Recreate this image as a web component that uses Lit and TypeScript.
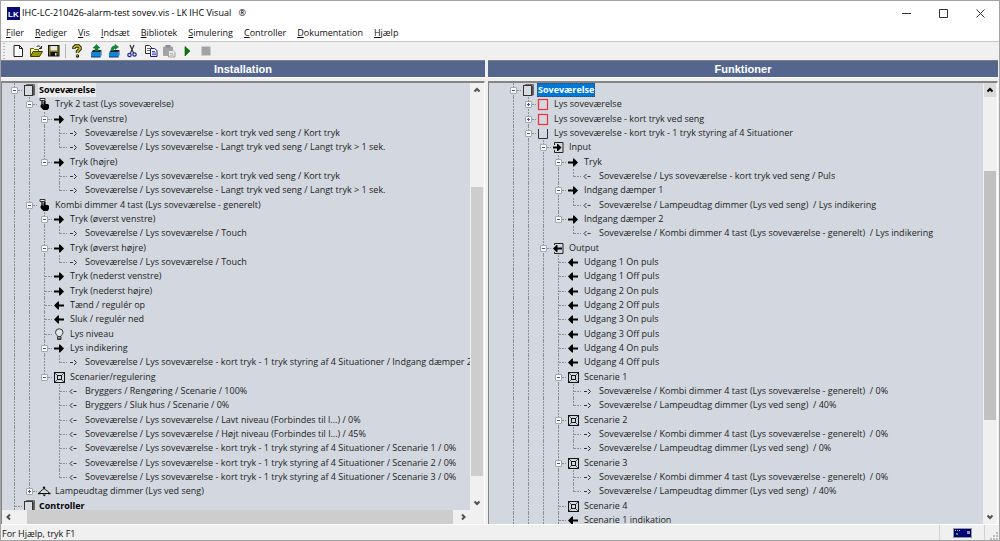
import { LitElement, html, svg, css, nothing, TemplateResult } from "lit";
import { customElement, property, state } from "lit/decorators.js";

type IconName =
  | "stack" | "hand" | "in" | "out" | "linkTo" | "linkFrom" | "bulb" | "scene"
  | "lamp" | "redBox" | "openBox" | "inputBox" | "outputBox";

/** [level, icon, label, expander] */
type Row = [number, IconName, string, ("-" | "+")?];

const glyphs: Record<IconName, TemplateResult> = {
  stack: svg`<path d="M4.5 2V1.5H12.5V12H12" fill="none" stroke="#666" /><path d="M10.5 2.5h1.5v10h-1.5z" fill="#555" />
    <rect x="2.5" y="2.5" width="8" height="10" fill="#d8dce2" stroke="#333" />`,
  hand: svg`<path d="M3 1.5h5v2H3z" fill="#eee" stroke="#333" /><path d="M5 3.5v4M8 4v3" stroke="#222" stroke-width="1.4" />
    <path d="M4.5 7h1l1 1V4.500h1.500V7H11l1 1v3l-1.500 2H6.500L3.500 10V8.500z" fill="#000" />`,
  in: svg`<path d="M2 6.500h5V3.500h1l4 4-4 4H7V8.500H2z" fill="#000" />`,
  out: svg`<path d="M12 6.500H7V3.500H6l-4 4 4 4h1V8.500h5z" fill="#000" />`,
  linkTo: svg`<path d="M3 7.500h3M7 5l2.500 2.500L7 10" fill="none" stroke="#333" />`,
  linkFrom: svg`<path d="M9.500 7.500h-3M5.500 5L3 7.500 5.500 10" fill="none" stroke="#333" />`,
  bulb: svg`<path d="M5.500 9.500C5.500 8 3.500 7.500 3.500 5.500a3.700 3.700 0 0 1 7.500 0C11 7.500 9 8 9 9.500z" fill="#e2e6ea" stroke="#333" />
    <path d="M5.500 10v2.500h3.500V10M5.500 11.200H9" fill="none" stroke="#333" />`,
  scene: svg`<rect x="2.500" y="2.500" width="10" height="10" fill="none" stroke="#111" /><rect x="5.500" y="5.500" width="4" height="4" fill="none" stroke="#111" />
    <path d="M3 3l2.500 2.500M12 3L9.500 5.500M3 12l2.500-2.500M12 12L9.500 9.500" stroke="#333" stroke-width=".8" />`,
  lamp: svg`<path d="M2.500 9.500C2.500 7 5 6.500 7 4.500 9 6.500 12 7 12 9.500z" fill="none" stroke="#111" />
    <circle cx="7" cy="3.800" r="1.200" fill="#111" /><path d="M1 9.500h2.500M11 9.500h2.500" stroke="#111" stroke-width="1.600" /><path d="M5.500 10.500h3.500l-1.700 2z" fill="#111" />`,
  redBox: svg`<rect x="2.500" y="2.500" width="9" height="10" fill="none" stroke="#f03038" stroke-width="1.200" />`,
  openBox: svg`<path d="M2.500 3v9.500h9V3" fill="none" stroke="#333" />`,
  inputBox: svg`<path d="M3.500 5V2.500h8.500v10H3.500V10" fill="none" stroke="#222" /><path d="M2 6.500h4V4h1l3.500 3.500L7 11H6V8.500H2z" fill="#000" />`,
  outputBox: svg`<path d="M3.500 4V2.500h8.500v10H3.500V11" fill="none" stroke="#222" /><path d="M11 6.500H6.500V4h-1L2 7.500 5.500 11h1V8.500H11z" fill="#000" />`,
};

const SV = "Soveværelse / ";
const installation: Row[] = [
  [0, "stack", "Soveværelse", "-"],
  [1, "hand", "Tryk 2 tast (Lys soveværelse)", "-"],
  [2, "in", "Tryk (venstre)", "-"],
  [3, "linkTo", SV + "Lys soveværelse - kort tryk ved seng / Kort tryk"],
  [3, "linkTo", SV + "Lys soveværelse - Langt tryk ved seng / Langt tryk > 1 sek."],
  [2, "in", "Tryk (højre)", "-"],
  [3, "linkTo", SV + "Lys soveværelse - kort tryk ved seng / Kort tryk"],
  [3, "linkTo", SV + "Lys soveværelse - Langt tryk ved seng / Langt tryk > 1 sek."],
  [1, "hand", "Kombi dimmer 4 tast (Lys soveværelse - generelt)", "-"],
  [2, "in", "Tryk (øverst venstre)", "-"],
  [3, "linkTo", SV + "Lys soveværelse / Touch"],
  [2, "in", "Tryk (øverst højre)", "-"],
  [3, "linkTo", SV + "Lys soveværelse / Touch"],
  [2, "in", "Tryk (nederst venstre)"],
  [2, "in", "Tryk (nederst højre)"],
  [2, "out", "Tænd / regulér op"],
  [2, "out", "Sluk / regulér ned"],
  [2, "bulb", "Lys niveau"],
  [2, "in", "Lys indikering", "-"],
  [3, "linkTo", SV + "Lys soveværelse - kort tryk - 1 tryk styring af 4 Situationer / Indgang dæmper 2"],
  [2, "scene", "Scenarier/regulering", "-"],
  [3, "linkFrom", "Bryggers / Rengøring / Scenarie / 100%"],
  [3, "linkFrom", "Bryggers / Sluk hus / Scenarie / 0%"],
  [3, "linkFrom", SV + "Lys soveværelse / Lavt niveau (Forbindes til l...) / 0%"],
  [3, "linkFrom", SV + "Lys soveværelse / Højt niveau (Forbindes til l...) / 45%"],
  [3, "linkFrom", SV + "Lys soveværelse - kort tryk - 1 tryk styring af 4 Situationer / Scenarie 1 / 0%"],
  [3, "linkFrom", SV + "Lys soveværelse - kort tryk - 1 tryk styring af 4 Situationer / Scenarie 2 / 0%"],
  [3, "linkFrom", SV + "Lys soveværelse - kort tryk - 1 tryk styring af 4 Situationer / Scenarie 3 / 0%"],
  [1, "lamp", "Lampeudtag dimmer (Lys ved seng)", "+"],
  [0, "stack", "Controller"],
];

const kombi = SV + "Kombi dimmer 4 tast (Lys soveværelse - generelt)  / ";
const lampe = SV + "Lampeudtag dimmer (Lys ved seng)  / ";
const scenario = (n: number, a: string, b: string): Row[] => [
  [3, "scene", `Scenarie ${n}`, "-"],
  [4, "linkTo", kombi + a],
  [4, "linkTo", lampe + b],
];
const functions: Row[] = [
  [0, "stack", "Soveværelse", "-"],
  [1, "redBox", "Lys soveværelse", "+"],
  [1, "redBox", "Lys soveværelse - kort tryk ved seng", "+"],
  [1, "openBox", "Lys soveværelse - kort tryk - 1 tryk styring af 4 Situationer", "-"],
  [2, "inputBox", "Input", "-"],
  [3, "in", "Tryk", "-"],
  [4, "linkFrom", SV + "Lys soveværelse - kort tryk ved seng / Puls"],
  [3, "in", "Indgang dæmper 1", "-"],
  [4, "linkFrom", lampe + "Lys indikering"],
  [3, "in", "Indgang dæmper 2", "-"],
  [4, "linkFrom", kombi + "Lys indikering"],
  [2, "outputBox", "Output", "-"],
  ...[1, 2, 3, 4].flatMap((n): Row[] => [
    [3, "out", `Udgang ${n} On puls`],
    [3, "out", `Udgang ${n} Off puls`],
  ]),
  ...scenario(1, "0%", "40%"),
  ...scenario(2, "0%", "0%"),
  ...scenario(3, "0%", "40%"),
  [3, "scene", "Scenarie 4"],
  [3, "out", "Scenarie 1 indikation"],
];

@customElement("tree-view")
class TreeView extends LitElement {
  @property({ attribute: false }) rows: Row[] = [];
  /** Levels whose branch runs on past the last row. */
  @property({ attribute: false }) openLevels: number[] = [];
  @property() marker = "inactive";
  @state() private closed = new Set<number>();

  static styles = css`
    :host { display: block; min-width: 0; overflow: hidden; color: #1c1c1c; }
    .row { display: flex; height: 14px; line-height: 14px; overflow: hidden; white-space: pre; }
    .row:nth-child(3n + 2) { height: 15px; }
    svg { display: block; flex: none; }
    .toggle { flex: none; border: 0; padding: 0; margin: 0; width: 15px; height: 15px; background: none; }
    .label { margin-left: 1px; padding: 0 1px; }
    .label:not(.bold) { padding-left: 2px; }
    .bold { font-weight: 700; color: #000; }
    .inactive { background: #ececec; }
    .active { background: #0078d7; color: #fff; outline: 1px dotted #3c4654; outline-offset: -1px; }
  `;

  private continues(i: number, level: number): boolean {
    for (let j = i + 1; j < this.rows.length; j++) {
      if (this.rows[j][0] < level) return false;
      if (this.rows[j][0] === level) return true;
    }
    return this.openLevels.includes(level);
  }

  private toggle(i: number) {
    const next = new Set(this.closed);
    next.has(i) ? next.delete(i) : next.add(i);
    this.closed = next;
  }

  private line(x1: number, y1: number, x2: number, y2: number) {
    return svg`<line x1=${x1} y1=${y1} x2=${x2} y2=${y2} stroke="#8b9096" stroke-dasharray="2 1" />`;
  }

  private joint(i: number, level: number, sign?: string) {
    const art = html`<svg width="15" height="15" viewBox="0 0 15 15" aria-hidden="true">
      ${this.line(7.5, 0, 7.5, this.continues(i, level) ? 15 : 8)}
      ${this.line(8, 7.5, 15, 7.5)}
      ${sign ? svg`<rect x="4.500" y="4.500" width="6" height="6" rx=".5" fill="#fafafa" stroke="#a3a6aa" />
        <path d=${sign === "+" ? "M6 7.500h3M7.500 6v3" : "M6 7.500h3"} stroke="#3b56a8" />` : nothing}
    </svg>`;
    return sign
      ? html`<button class="toggle" aria-label=${sign === "+" ? "Fold ud" : "Fold ind"} @click=${() => this.toggle(i)}>${art}</button>`
      : art;
  }

  render() {
    let hiddenBelow = Infinity;
    return html`<div role="tree">${this.rows.map(([level, icon, label, sign], i) => {
      if (level > hiddenBelow) return nothing;
      hiddenBelow = this.closed.has(i) ? level : Infinity;
      const shown = sign && this.closed.has(i) ? (sign === "-" ? "+" : "-") : sign;
      const mark = level === 0 ? (i === 0 ? `bold ${this.marker}` : "bold") : "";
      return html`<div class="row" role="treeitem" aria-level=${level + 1}>
        ${level ? html`<svg width=${level * 15} height="15" aria-hidden="true">
          ${Array.from({ length: level }, (_, k) => this.continues(i, k) ? this.line(k * 15 + 7.5, 0, k * 15 + 7.5, 15) : nothing)}
        </svg>` : nothing}${this.joint(i, level, shown)}<svg width="15" height="14" viewBox="0 0 15 14" aria-hidden="true">${glyphs[icon]}</svg><span class="label ${mark}">${label}</span></div>`;
    })}</div>`;
  }
}

@customElement("scroll-bar")
class ScrollBar extends LitElement {
  @property() direction = "vertical";
  @property({ type: Boolean }) hot = false;
  /** Shares of the track before, under and after the thumb. */
  @property({ attribute: false }) parts: number[] = [0, 1, 0];

  static styles = css`
    :host { display: block; background: #f0f0f0; min-width: 0; min-height: 0; }
    .bar { display: flex; height: 100%; }
    .vertical { flex-direction: column; padding: 0 1px; }
    button { flex: none; display: grid; place-items: center; width: 14px; height: 13px; padding: 0; border: 0; background: none; }
    .vertical button { width: 100%; height: 14px; }
    .thumb { background: #cdcdcd; }
    .hot .thumb { background: #c1c1c1; }
    .hot button:first-child { background: #dadada; }
    path { fill: none; stroke: #505050; stroke-width: 2; }
    .hot button:first-child path { stroke: #000; }
  `;

  render() {
    const vertical = this.direction === "vertical";
    const [a, b, c] = this.parts;
    const arrow = (d: string, name: string) => html`<button aria-label=${name}>
      <svg width="8" height="8" viewBox="0 0 8 8"><path d=${d} /></svg></button>`;
    return html`<div class="bar ${this.direction} ${this.hot ? "hot" : ""}">
      ${vertical ? arrow("M1.500 5.500L4 3l2.500 2.500", "Rul op") : arrow("M5 1.500L2.500 4 5 6.500", "Rul til venstre")}
      <div style="flex:${a} 0 0"></div><div class="thumb" style="flex:${b} 0 0"></div><div style="flex:${c} 0 0"></div>
      ${vertical ? arrow("M1.500 2.500L4 5l2.500-2.500", "Rul ned") : arrow("M3 1.500L5.500 4 3 6.500", "Rul til højre")}
    </div>`;
  }
}

const basket = svg`<path d="M2.500 8L4 6h8.500L11.500 8z" fill="#222" /><rect x="2" y="8" width="9.500" height="5" rx=".5" fill="#1583d8" /><path d="M2 13h9.500" stroke="#0a3d70" /><path d="M11.500 8l1-2v5l-1 2z" fill="#0b5a9c" />`;
const tools: Record<string, TemplateResult> = {
  Ny: svg`<path d="M3 1.500h5.500l3 3v8H3z" fill="#fff" stroke="#222" /><path d="M8.500 1.500v3h3" fill="none" stroke="#222" />`,
  Åbn: svg`<path d="M1.500 12V4.500h3l1 1h4V7" fill="#ffffa0" stroke="#5c5c00" /><path d="M1.500 12.500L4 7.500h9.500l-3 5z" fill="#98980c" stroke="#3e3e00" /><path d="M7.500 3c1.500-2 3.500-1 4.500 1M12.500 2v2.500H10" fill="none" stroke="#222" />`,
  Gem: svg`<rect x="1.500" y="1.500" width="10.500" height="10.500" fill="#7c7c14" stroke="#111" /><rect x="3.500" y="2" width="6.500" height="4.500" fill="#e8e8e8" /><rect x="3.500" y="8" width="7" height="4" fill="#111" /><rect x="8" y="9" width="1.500" height="2.500" fill="#ddd" />`,
  Hjælp: svg`<path d="M4 5V3.500L5.500 2h3L10 3.500V5L7.500 7.500V9" fill="none" stroke="#111" stroke-width="3.400" /><path d="M4 4.500V3.500L5.500 2h3L10 3.500V5L7.500 7.500V9" fill="none" stroke="#d8d000" stroke-width="1.600" /><circle cx="7.500" cy="12" r="1.700" fill="#111" /><circle cx="7.300" cy="11.800" r=".8" fill="#d8d000" />`,
  Hent: svg`${basket}<path d="M7.500 0.500L11 4H9v3H6V4H4z" fill="#0a8c28" stroke="#064" stroke-width=".5" />`,
  Send: svg`${basket}<path d="M4 6.500c0-3 1-4.500 4-4.500V.5L11.500 3 8 5.500V4.200C6.500 4.200 6.500 5 6.500 7z" fill="#0a8c28" stroke="#064" stroke-width=".5" />`,
  Klip: svg`<path d="M5 1l3.500 8M9 1L5.500 9" stroke="#333" stroke-width="1.200" /><circle cx="4.500" cy="11" r="1.700" fill="none" stroke="#2424a0" stroke-width="1.200" /><circle cx="9.500" cy="10.500" r="1.700" fill="none" stroke="#2424a0" stroke-width="1.200" />`,
  Kopier: svg`<path d="M1.500 1.500h4l2 2v6h-6z" fill="#fff" stroke="#333" /><path d="M3 4.500h3M3 6.500h3" stroke="#333" stroke-width=".7" /><path d="M6.500 4.500h4l2.500 2v6H6.500z" fill="#fff" stroke="#1c1c90" /><path d="M8 7.500h3M8 9h4M8 10.700h4" stroke="#1c1c90" stroke-width=".8" />`,
  "Sæt ind": svg`<rect x="1" y="2.500" width="10" height="9.500" rx="1" fill="#a2a2a2" /><rect x="3.500" y="1" width="5" height="2.500" fill="#8c8c8c" /><path d="M6.500 6.500h4.500l2 2v4.500H6.500z" fill="#ececec" stroke="#a0a0a0" /><path d="M8 9.500h3M8 11.200h3.500" stroke="#a0a0a0" stroke-width=".8" />`,
  Start: svg`<path d="M5 2.500l5 4.500-5 5z" fill="#067a06" stroke="#055005" stroke-width=".6" />`,
  Stop: svg`<rect x="2.500" y="2.500" width="9" height="9" fill="#a3a3a3" />`,
};

@customElement("app-root")
class AppRoot extends LitElement {
  static styles = css`
    :host {
      display: flex; flex-direction: column; box-sizing: border-box; height: 100vh; overflow: hidden;
      background: #f0f0f0; border: 1px solid #a3a3a3; color: #111;
      font: 9px/14px "Open Sans", "Noto Sans", sans-serif;
    }
    button { font: inherit; color: inherit; border: 0; padding: 0; margin: 0; background: none; }
    svg { display: block; }
    .title { flex: none; display: flex; align-items: center; height: 24px; padding-left: 6px; background: #fff; }
    .title h1 { flex: 1; margin: 0 0 0 2px; font: inherit; color: #000; }
    .reg { margin-left: 5px; }
    .winbtn { width: 37px; height: 22px; display: grid; place-items: center; }
    .winbtn path { fill: none; stroke: #333; }
    .logo text { font: 700 8px "Liberation Sans", sans-serif; fill: #fff; }
    .menu { flex: none; display: flex; gap: 11px; height: 16px; padding-left: 5px; background: #fff; border-bottom: 1px solid #c6c6c6; }
    .menu u { text-underline-offset: 1px; }
    .tools { flex: none; display: flex; align-items: center; height: 18px; padding-left: 2px; }
    .grip { width: 2px; height: 16px; margin-right: 4px; background: repeating-linear-gradient(#b8b8b8 0 1px, #f0f0f0 1px 3px); }
    .group { display: grid; grid-auto-flow: column; grid-auto-columns: 18px; }
    .wide { grid-auto-columns: 1fr; width: 147px; }
    .tool { display: grid; place-items: center; height: 16px; }
    .sep { width: 1px; height: 14px; margin: 0 2px; background: #b4b4b4; }
    .panes { flex: 1; min-height: 0; display: grid; grid-template-columns: 484fr 510fr; gap: 3px; padding-right: 1px; border-bottom: 1px solid #fff; }
    .pane { display: flex; flex-direction: column; min-width: 0; min-height: 0; }
    .pane h2 {
      flex: none; margin: 0 0 3px; height: 16px; border-top: 1px solid #808080; border-bottom: 1px solid #fff;
      background: #54668e; color: #fff; text-align: center;
      font: 700 11px/17px "Liberation Sans", Arial, sans-serif;
    }
    .frame {
      flex: 1; min-height: 0; display: grid; grid-template: minmax(0, 1fr) auto / minmax(0, 1fr) 14px;
      border-top: 2px solid #858585; border-left: 1px solid #858585; border-right: 1px solid #fff;
    }
    .frame tree-view { background: #d3d8e0; }
    .install tree-view { padding-left: 5px; }
    .functions tree-view { padding-left: 17px; }
    .hbar { height: 14px; }
    .status { flex: none; display: flex; align-items: center; height: 15px; }
    .status .msg { flex: 1; padding: 2px 0 0 1px; }
    .cell { display: grid; place-items: center; align-self: stretch; width: 44px; border-left: 1px solid #d0d0d0; }
    .size { width: 14px; place-items: end; }
  `;

  private tool(name: string) {
    return html`<button class="tool" aria-label=${name}><svg width="14" height="14" viewBox="0 0 14 14">${tools[name]}</svg></button>`;
  }

  private windowButton(name: string, d: string) {
    return html`<button class="winbtn" aria-label=${name}><svg width="11" height="11" viewBox="0 0 11 11"><path d=${d} /></svg></button>`;
  }

  render() {
    const menus = ["Filer", "Rediger", "Vis", "Indsæt", "Bibliotek", "Simulering", "Controller", "Dokumentation", "Hjælp"];
    const names = Object.keys(tools);
    return html`
      <header class="title">
        <svg class="logo" width="13" height="13" viewBox="0 0 13 13" aria-hidden="true"><rect width="13" height="13" fill="#0b0b78" /><text x="1" y="9.500">LK</text></svg>
        <h1>IHC-LC-210426-alarm-test sovev.vis - LK IHC Visual <span class="reg">®</span></h1>
        ${this.windowButton("Minimer", "M1 5.500h9")}
        ${this.windowButton("Maksimer", "M1.500 1.500h8v8h-8z")}
        ${this.windowButton("Luk", "M1.500 1.500l8 8M9.500 1.500l-8 8")}
      </header>
      <nav class="menu">${menus.map((m) => html`<button><u>${m[0]}</u>${m.slice(1)}</button>`)}</nav>
      <div class="tools" role="toolbar">
        <span class="grip"></span>
        <div class="group">${names.slice(0, 3).map((n) => this.tool(n))}</div>
        <span class="sep"></span>
        <div class="group wide">${names.slice(3).map((n) => this.tool(n))}</div>
      </div>
      <main class="panes">
        <section class="pane install">
          <h2>Installation</h2>
          <div class="frame">
            <tree-view .rows=${installation} .openLevels=${[0]} marker="inactive"></tree-view>
            <scroll-bar .parts=${[90, 290, 20]}></scroll-bar>
            <scroll-bar class="hbar" direction="horizontal" .parts=${[11, 426, 3]}></scroll-bar>
          </div>
        </section>
        <section class="pane functions">
          <h2>Funktioner</h2>
          <div class="frame">
            <tree-view .rows=${functions} .openLevels=${[0, 1, 2, 3]} marker="active"></tree-view>
            <scroll-bar hot .parts=${[74, 249, 90]}></scroll-bar>
          </div>
        </section>
      </main>
      <footer class="status">
        <span class="msg">For Hjælp, tryk F1</span>
        <span class="cell"><svg width="19" height="10" viewBox="0 0 19 10"><rect x=".5" y=".5" width="18" height="9" fill="#00007c" stroke="#9a9a9a" />
          <path d="M2 2.500h5" stroke="#aab" stroke-dasharray="1 1" /><rect x="3" y="5" width="2" height="2" fill="#18b030" /><rect x="14" y="3" width="3" height="3" fill="#999" /></svg></span>
        <span class="cell size"><svg width="9" height="9" viewBox="0 0 9 9"><path d="M6 1h2v2H6zM3 4h2v2H3zM6 4h2v2H6zM0 7h2v2H0zM3 7h2v2H3zM6 7h2v2H6z" fill="#bdbdbd" /></svg></span>
      </footer>`;
  }
}
